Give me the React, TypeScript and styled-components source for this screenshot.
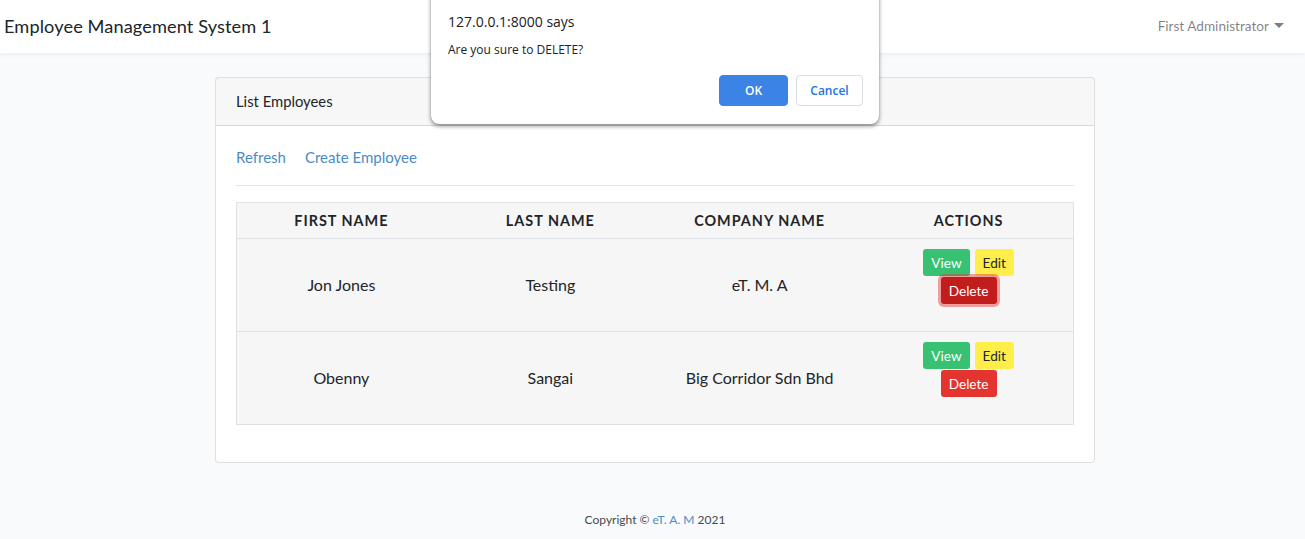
import React, { FC } from 'react'
import styled, { createGlobalStyle } from 'styled-components'

type Employee = {
  id: number
  firstName: string
  lastName: string
  company: string
  focused?: boolean
}

const EMPLOYEES: Employee[] = [
  { id: 1, firstName: 'Jon Jones', lastName: 'Testing', company: 'eT. M. A', focused: true },
  { id: 2, firstName: 'Obenny', lastName: 'Sangai', company: 'Big Corridor Sdn Bhd' },
]

const COLUMNS = ['First Name', 'Last Name', 'Company Name', 'Actions']

const GlobalStyle = createGlobalStyle`
  html, body {
    margin: 0;
    padding: 0;
    background: #f8fafc;
    font-family: Lato, "Noto Sans", sans-serif;
    font-size: 14.8px;
    color: #212529;
  }
`

// ナビバー
const SNav = styled.nav`
  height: 53px;
  background: #fff;
  box-shadow: 0 2px 4px rgba(0, 0, 0, 0.05);
  display: flex;
  align-items: center;
  justify-content: space-between;
  padding: 0 21px 0 4px;
`
const SBrand = styled.div`
  font-size: 18.2px;
  color: #212529;
  letter-spacing: 0.1px;
  margin-top: -1px;
`
const SUser = styled.div`
  display: flex;
  align-items: center;
  gap: 5px;
  color: rgba(0, 0, 0, 0.5);
  font-size: 13.6px;
  margin-top: -2px;
  &::after {
    content: '';
    border-top: 5px solid rgba(0, 0, 0, 0.5);
    border-left: 5px solid transparent;
    border-right: 5px solid transparent;
  }
`

const SMain = styled.main`
  padding: 24px 0 0 5px;
  display: flex;
  justify-content: center;
`
const SCard = styled.div`
  width: 880px;
  box-sizing: border-box;
  background: #fff;
  border: 1px solid rgba(0, 0, 0, 0.125);
  border-radius: 4px;
`
const SCardHeader = styled.div`
  background: rgba(0, 0, 0, 0.03);
  border-bottom: 1px solid rgba(0, 0, 0, 0.125);
  padding: 12px 20px 13px;
  line-height: 22px;
`
const SCardBody = styled.div`
  padding: 20px 20px 37px;
`
const SLinks = styled.div`
  display: flex;
  gap: 19px;
  line-height: 22px;
  font-size: 15px;
`
const SLink = styled.a`
  color: #4a8bc8;
  text-decoration: none;
`
const SHr = styled.hr`
  border: 0;
  border-top: 1px solid rgba(0, 0, 0, 0.1);
  margin: 17px 0 16px;
`
const STable = styled.table`
  width: 100%;
  border-collapse: collapse;
  background: #f6f6f6;
  border: 1px solid #dee2e6;
  table-layout: fixed;
`
const STh = styled.th`
  height: 35px;
  padding: 0;
  text-transform: uppercase;
  letter-spacing: 1px;
  font-weight: 700;
  font-size: 14.4px;
  border-bottom: 1px solid #dee2e6;
  text-align: center;
  color: #212529;
`
const STr = styled.tr`
  & + & td {
    border-top: 1px solid #dee2e6;
  }
`
const STd = styled.td`
  height: 93px;
  box-sizing: border-box;
  padding: 0 0 1px;
  text-align: center;
  vertical-align: middle;
  font-size: 16px;
`
const SActionTd = styled.td`
  height: 93px;
  box-sizing: border-box;
  padding: 10px 0 0;
  vertical-align: top;
  text-align: center;
`
const SActions = styled.div`
  display: flex;
  flex-wrap: wrap;
  justify-content: center;
  width: 100px;
  margin: 0 auto;
  column-gap: 5px;
`

const VARIANTS = {
  view: { bg: '#38c172', fg: '#fff' },
  edit: { bg: '#ffed4a', fg: '#212529' },
  delete: { bg: '#e3342f', fg: '#fff' },
  focused: { bg: '#c21d1d', fg: '#fff' },
}

const SButton = styled.button<{ $variant: keyof typeof VARIANTS }>`
  border: 0;
  border-radius: 3px;
  height: 27px;
  padding: 0 8px;
  font-family: inherit;
  font-size: 13.6px;
  background: ${(p) => VARIANTS[p.$variant].bg};
  color: ${(p) => VARIANTS[p.$variant].fg};
  box-shadow: ${(p) => (p.$variant === 'focused' ? '0 0 0 3px rgba(227, 52, 47, 0.45)' : 'none')};
  margin-top: ${(p) => (p.$variant === 'focused' || p.$variant === 'delete' ? '1px' : '0')};
`

const SFooter = styled.footer`
  text-align: center;
  font-size: 12px;
  color: #4a4a4a;
  padding: 49px 0 0 5px;
`
const SFooterLink = styled.span`
  color: #4a8bc8;
`

// ブラウザの確認ダイアログ
const SDialog = styled.div`
  position: absolute;
  left: 431px;
  top: -10px;
  width: 448px;
  height: 134px;
  box-sizing: border-box;
  background: #fff;
  border-radius: 0 0 8px 8px;
  box-shadow: 0 2px 4px rgba(0, 0, 0, 0.45), 0 0 1px rgba(0, 0, 0, 0.4);
  font-family: "Open Sans", "Noto Sans", sans-serif;
  padding: 22px 16px 0 17px;
`
const SDialogTitle = styled.div`
  font-size: 14px;
  line-height: 20px;
  color: #202124;
`
const SDialogText = styled.div`
  font-size: 12px;
  line-height: 18px;
  color: #202124;
  margin-top: 9px;
`
const SDialogButtons = styled.div`
  display: flex;
  justify-content: flex-end;
  gap: 8px;
  margin-top: 16px;
`
const SDialogButton = styled.button<{ $primary?: boolean }>`
  height: 31px;
  width: ${(p) => (p.$primary ? '69px' : '67px')};
  border-radius: 4px;
  font-family: inherit;
  font-size: 12px;
  font-weight: 600;
  border: 1px solid ${(p) => (p.$primary ? '#3b83e5' : '#dadce0')};
  background: ${(p) => (p.$primary ? '#3b83e5' : '#fff')};
  color: ${(p) => (p.$primary ? '#fff' : '#1a73e8')};
`

const App: FC = () => {
  return (
    <>
      <GlobalStyle />
      <SNav>
        <SBrand>Employee Management System 1</SBrand>
        <SUser>First Administrator</SUser>
      </SNav>
      <SMain>
        <SCard>
          <SCardHeader>List Employees</SCardHeader>
          <SCardBody>
            <SLinks>
              <SLink href="#">Refresh</SLink>
              <SLink href="#">Create Employee</SLink>
            </SLinks>
            <SHr />
            <STable>
              <thead>
                <tr>
                  {COLUMNS.map((c) => (
                    <STh key={c}>{c}</STh>
                  ))}
                </tr>
              </thead>
              <tbody>
                {EMPLOYEES.map((e) => (
                  <STr key={e.id}>
                    <STd>{e.firstName}</STd>
                    <STd>{e.lastName}</STd>
                    <STd>{e.company}</STd>
                    <SActionTd>
                      <SActions>
                        <SButton $variant="view">View</SButton>
                        <SButton $variant="edit">Edit</SButton>
                        <SButton $variant={e.focused ? 'focused' : 'delete'}>Delete</SButton>
                      </SActions>
                    </SActionTd>
                  </STr>
                ))}
              </tbody>
            </STable>
          </SCardBody>
        </SCard>
      </SMain>
      <SFooter>
        Copyright © <SFooterLink>eT. A. M</SFooterLink> 2021
      </SFooter>
      <SDialog>
        <SDialogTitle>127.0.0.1:8000 says</SDialogTitle>
        <SDialogText>Are you sure to DELETE?</SDialogText>
        <SDialogButtons>
          <SDialogButton $primary>OK</SDialogButton>
          <SDialogButton>Cancel</SDialogButton>
        </SDialogButtons>
      </SDialog>
    </>
  )
}

export default App
